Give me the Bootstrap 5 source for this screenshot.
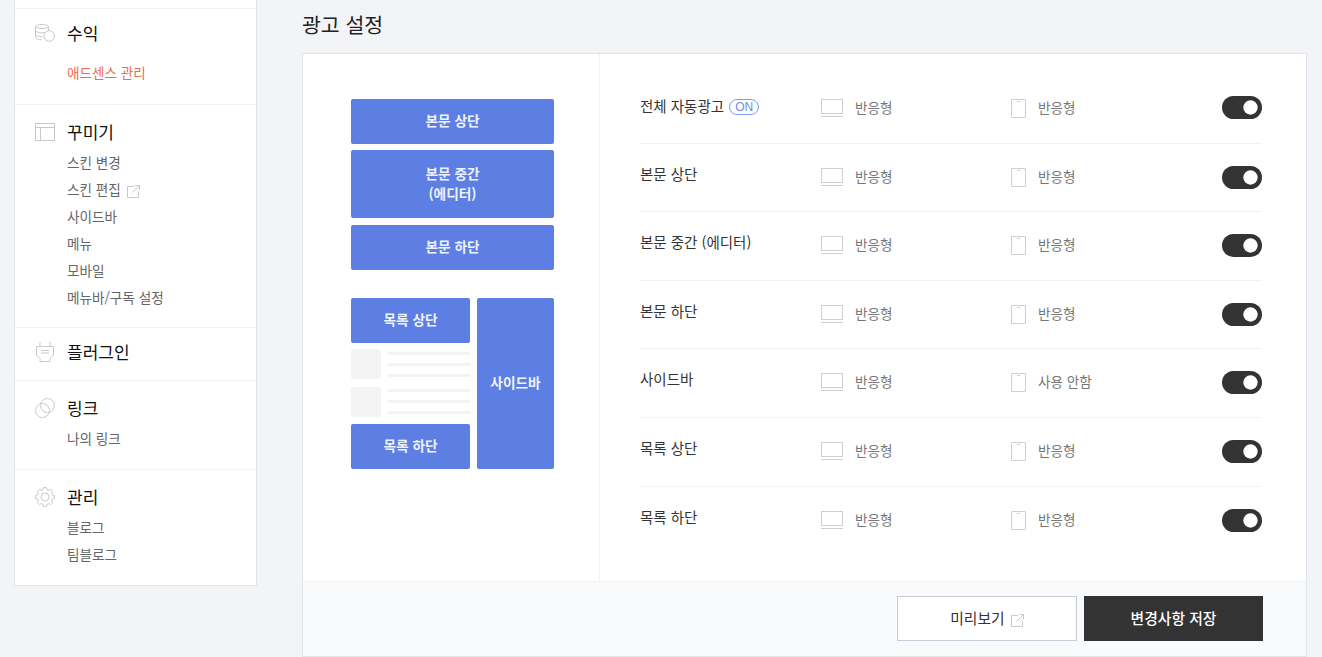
<!DOCTYPE html>
<html lang="ko">
<head>
    <meta charset="UTF-8">
    <meta name="viewport" content="width=device-width, initial-scale=1.0">
    <link rel="stylesheet" href="https://cdn.jsdelivr.net/npm/bootstrap@5.3.2/dist/css/bootstrap.min.css">
    <title>광고 설정</title>
    <style>
        html, body { height: 657px; overflow: hidden; }
        body { background: #f3f4f7; font-family: "Noto Sans CJK KR", "Noto Sans", sans-serif; color: #333; }
        .page-wrap { padding: 0 15px 0 14px; height: 657px; }

        .side-box { width: 243px; height: 586px; flex: none; background: #fff; border: 1px solid #e2e4ec; border-top: 0; padding-top: 8px; }
        .side-sec { padding: 15px 20px 17px 20px; border-top: 1px solid #f1f2f5; }
        .side-sec.sec-rev { padding: 12px 20px 18px 20px; }
        .side-sec.sec-deco { padding-bottom: 16px; }
        .side-sec.sec-short { padding: 12px 20px 16px 20px; }
        .side-head { height: 24px; line-height: 24px; font-size: 17px; color: #111; gap: 12px; }
        .side-head svg { flex: none; }
        .side-sub { display: block; height: 27px; line-height: 27px; font-size: 13.6px; color: #666; margin-left: 32px; text-decoration: none; }
        .side-sub.first-gap { margin-top: 14px; }
        .side-sub.is-on { color: #ef6c50; }
        .side-sub svg { margin-left: 2px; }
        .side-list { padding-top: 5px; }

        .main-col { width: 1005px; margin-left: 45px; flex: none; }
        .main-title { height: 53px; margin: 0; padding-top: 9px; line-height: 30px; font-size: 20.5px; font-weight: 400; color: #222; }
        .main-card { height: 604px; background: #fff; border: 1px solid #e2e4ec; }
        .main-body { height: 527px; }
        .preview-pane { width: 297px; flex: none; border-right: 1px solid #f1f2f5; padding: 45px 0 0 48px; }
        .ad-block { background: #5d7fe3; color: #eef2fd; border-radius: 2px; font-size: 13.7px; font-weight: 700; line-height: 20px; text-align: center; padding-bottom: 3px; }
        .ad-sm { height: 45px; }
        .ad-lg { height: 68px; }
        .stack-top { width: 203px; gap: 6.4px; }
        .stack-low { width: 203px; margin-top: 28px; gap: 7px; height: 171px; }
        .low-left { width: 119px; }
        .low-right { width: 77px; }
        .fake-list { height: 81px; padding: 6px 0 7px; gap: 8px; }
        .fake-item { height: 30px; gap: 7px; }
        .fake-thumb { width: 30px; background: #f4f4f4; border-radius: 2px; }
        .fake-lines { gap: 8px; padding-top: 3px; }
        .fake-item + .fake-item .fake-lines { padding-top: 2px; }
        .fake-lines i { display: block; height: 3px; background: #f3f3f3; }

        .rows-pane { padding: 21px 44px 0 40px; min-width: 0; }
        .ad-row { height: 68.6px; padding-top: 22px; border-bottom: 1px solid #f1f2f5; }
        .ad-row:first-child { padding-top: 21px; }
        .ad-row:last-child { border-bottom: 0; }
        .row-name { width: 181px; flex: none; font-size: 14.5px; line-height: 20px; color: #333; margin-top: -2px; }
        .ad-row:first-child .row-name { margin-top: 0; }
        .on-tag { display: inline-block; height: 16px; padding: 0 5px; margin-left: 1px; border: 1px solid #7d9bec; border-radius: 8px; color: #6c8ce8; font: 400 12px/14px "Liberation Sans", sans-serif; vertical-align: 1px; }
        .dev-pc { width: 190px; flex: none; gap: 12px; }
        .dev-mo { gap: 12px; }
        .dev-pc svg, .dev-mo svg { margin-top: 2px; }
        .ad-row:first-child .dev-pc svg, .ad-row:first-child .dev-mo svg { margin-top: 3px; }
        .dev-txt { font-size: 13.6px; line-height: 22px; color: #777; margin-top: -1px; }
        .ad-row:first-child .dev-txt { margin-top: 0; }
        .form-switch .form-check-input.ad-toggle {
            width: 40px; height: 23px; margin: 0; float: none;
            background-color: #333; border: 0;
            background-image: url("data:image/svg+xml,%3csvg xmlns='http://www.w3.org/2000/svg' viewBox='-4 -4 8 8'%3e%3ccircle r='2.5' fill='%23fff'/%3e%3c/svg%3e");
            background-position: right center;
        }
        .form-switch.ad-switch { padding: 0; min-height: 0; margin: 0; }

        .main-foot { height: 75px; background: #f9fafc; border-top: 1px solid #eef0f4; padding: 14px 43px 0 0; gap: 7px; }
        .foot-btn { height: 45px; border-radius: 0; font-size: 14.8px; padding: 0; }
        .foot-ghost { width: 180px; background: #fff; border: 1px solid #c8ccd8; color: #333; }
        .foot-ghost svg { margin-left: 2px; }
        .foot-dark { width: 179px; background: #333; border: 1px solid #333; color: #fff; font-weight: 500; }
    </style>
</head>
<body>
    <svg width="0" height="0" class="d-none">
        <symbol id="ico-pc" viewBox="0 0 22 19"><rect x=".5" y=".5" width="21" height="14" fill="none" stroke="#cfcfcf"/><path d="M0 17.500h22" fill="none" stroke="#cfcfcf"/></symbol>
        <symbol id="ico-mo" viewBox="0 0 15 19"><rect x=".5" y=".5" width="14" height="18" rx=".5" fill="none" stroke="#cfcfcf"/><path d="M6 2.500h3" fill="none" stroke="#cfcfcf"/></symbol>
        <symbol id="ico-ext" viewBox="0 0 13 13"><path d="M7 1.500H.5v11h11V6.500M5.500 7.500l6.500-6.500M8 .5h4.500V5" fill="none" stroke="#c9c9c9"/></symbol>
    </svg>
    <div class="page-wrap d-flex">
        <nav class="side-box">
            <div class="side-sec sec-rev">
                <div class="side-head d-flex align-items-center">
                    <svg width="20" height="18" viewBox="0 0 20 18" fill="none" stroke="#c9c9c9"><ellipse cx="7" cy="2.500" rx="6.500" ry="2"/><path d="M.5 2.500v11c0 1.300 3 2.200 6.500 2.200M.5 6.500c0 1.300 3 2.200 6.500 2.200 1.200 0 2.300-.1 3.200-.3M.5 10.500c0 1.300 3 2.200 7 2.200M13.500 2.500v4"/><circle cx="14.200" cy="12" r="5.300" fill="#fff"/></svg>
                    <span>수익</span>
                </div>
                <a class="side-sub first-gap is-on" href="#">애드센스 관리</a>
            </div>
            <div class="side-sec sec-deco">
                <div class="side-head d-flex align-items-center">
                    <svg width="20" height="18" viewBox="0 0 20 18" fill="none" stroke="#c9c9c9"><rect x=".5" y=".5" width="19" height="17"/><path d="M.5 4.500h19M5.500 4.500v13"/></svg>
                    <span>꾸미기</span>
                </div>
                <div class="side-list">
                    <a class="side-sub" href="#">스킨 변경</a>
                    <a class="side-sub" href="#">스킨 편집 <svg width="13" height="13"><use href="#ico-ext"/></svg></a>
                    <a class="side-sub" href="#">사이드바</a>
                    <a class="side-sub" href="#">메뉴</a>
                    <a class="side-sub" href="#">모바일</a>
                    <a class="side-sub" href="#">메뉴바/구독 설정</a>
                </div>
            </div>
            <div class="side-sec sec-short">
                <div class="side-head d-flex align-items-center">
                    <svg width="20" height="20" viewBox="0 0 20 20" fill="none" stroke="#c9c9c9"><path d="M5 0v4.500M15 0v4.500M1.500 4.500h17v8.500l-3.500 3.500v3h-10v-3l-3.500-3.500z"/><path d="M6 8.500h8M6 11h8"/></svg>
                    <span>플러그인</span>
                </div>
            </div>
            <div class="side-sec">
                <div class="side-head d-flex align-items-center">
                    <svg width="20" height="20" viewBox="0 0 20 20" fill="none" stroke="#c9c9c9"><circle cx="7.500" cy="12.500" r="7"/><circle cx="12.500" cy="7.500" r="7"/></svg>
                    <span>링크</span>
                </div>
                <div class="side-list">
                    <a class="side-sub" href="#">나의 링크</a>
                </div>
            </div>
            <div class="side-sec">
                <div class="side-head d-flex align-items-center">
                    <svg width="20" height="20" viewBox="0 0 20 20" fill="none" stroke="#c9c9c9" stroke-linejoin="round"><path d="M8.140 2.530 8.350.64h3.300l.21 1.890 2.110.87 1.480-1.180 2.330 2.330-1.180 1.480.87 2.110 1.890.21v3.300l-1.890.21-.87 2.110 1.180 1.480-2.330 2.330-1.480-1.180-2.110.87-.21 1.890h-3.300l-.21-1.890-2.110-.87-1.480 1.180-2.330-2.330 1.180-1.480-.87-2.110-1.890-.21v-3.300l1.890-.21.87-2.110-1.180-1.480 2.330-2.330 1.480 1.180z"/><circle cx="10" cy="10" r="4"/></svg>
                    <span>관리</span>
                </div>
                <div class="side-list">
                    <a class="side-sub" href="#">블로그</a>
                    <a class="side-sub" href="#">팀블로그</a>
                </div>
            </div>
        </nav>

        <main class="main-col">
            <h2 class="main-title">광고 설정</h2>
            <div class="main-card">
                <div class="main-body d-flex">
                    <div class="preview-pane">
                        <div class="stack-top d-flex flex-column">
                            <div class="ad-block ad-sm d-flex align-items-center justify-content-center">본문 상단</div>
                            <div class="ad-block ad-lg d-flex align-items-center justify-content-center">본문 중간<br>(에디터)</div>
                            <div class="ad-block ad-sm d-flex align-items-center justify-content-center">본문 하단</div>
                        </div>
                        <div class="stack-low d-flex">
                            <div class="low-left d-flex flex-column">
                                <div class="ad-block ad-sm d-flex align-items-center justify-content-center">목록 상단</div>
                                <div class="fake-list d-flex flex-column">
                                    <div class="fake-item d-flex">
                                        <div class="fake-thumb"></div>
                                        <div class="fake-lines flex-grow-1 d-flex flex-column"><i></i><i></i><i></i></div>
                                    </div>
                                    <div class="fake-item d-flex">
                                        <div class="fake-thumb"></div>
                                        <div class="fake-lines flex-grow-1 d-flex flex-column"><i></i><i></i><i></i></div>
                                    </div>
                                </div>
                                <div class="ad-block ad-sm d-flex align-items-center justify-content-center">목록 하단</div>
                            </div>
                            <div class="low-right ad-block d-flex align-items-center justify-content-center">사이드바</div>
                        </div>
                    </div>
                    <div class="rows-pane flex-grow-1">
                        <div class="ad-row d-flex">
                            <div class="row-name">전체 자동광고 <span class="on-tag">ON</span></div>
                            <div class="dev-pc d-flex"><svg width="22" height="19"><use href="#ico-pc"/></svg><span class="dev-txt">반응형</span></div>
                            <div class="dev-mo d-flex flex-grow-1"><svg width="15" height="19"><use href="#ico-mo"/></svg><span class="dev-txt">반응형</span></div>
                            <div class="form-check form-switch ad-switch"><input class="form-check-input ad-toggle" type="checkbox" role="switch" checked></div>
                        </div>
                        <div class="ad-row d-flex">
                            <div class="row-name">본문 상단</div>
                            <div class="dev-pc d-flex"><svg width="22" height="19"><use href="#ico-pc"/></svg><span class="dev-txt">반응형</span></div>
                            <div class="dev-mo d-flex flex-grow-1"><svg width="15" height="19"><use href="#ico-mo"/></svg><span class="dev-txt">반응형</span></div>
                            <div class="form-check form-switch ad-switch"><input class="form-check-input ad-toggle" type="checkbox" role="switch" checked></div>
                        </div>
                        <div class="ad-row d-flex">
                            <div class="row-name">본문 중간 (에디터)</div>
                            <div class="dev-pc d-flex"><svg width="22" height="19"><use href="#ico-pc"/></svg><span class="dev-txt">반응형</span></div>
                            <div class="dev-mo d-flex flex-grow-1"><svg width="15" height="19"><use href="#ico-mo"/></svg><span class="dev-txt">반응형</span></div>
                            <div class="form-check form-switch ad-switch"><input class="form-check-input ad-toggle" type="checkbox" role="switch" checked></div>
                        </div>
                        <div class="ad-row d-flex">
                            <div class="row-name">본문 하단</div>
                            <div class="dev-pc d-flex"><svg width="22" height="19"><use href="#ico-pc"/></svg><span class="dev-txt">반응형</span></div>
                            <div class="dev-mo d-flex flex-grow-1"><svg width="15" height="19"><use href="#ico-mo"/></svg><span class="dev-txt">반응형</span></div>
                            <div class="form-check form-switch ad-switch"><input class="form-check-input ad-toggle" type="checkbox" role="switch" checked></div>
                        </div>
                        <div class="ad-row d-flex">
                            <div class="row-name">사이드바</div>
                            <div class="dev-pc d-flex"><svg width="22" height="19"><use href="#ico-pc"/></svg><span class="dev-txt">반응형</span></div>
                            <div class="dev-mo d-flex flex-grow-1"><svg width="15" height="19"><use href="#ico-mo"/></svg><span class="dev-txt">사용 안함</span></div>
                            <div class="form-check form-switch ad-switch"><input class="form-check-input ad-toggle" type="checkbox" role="switch" checked></div>
                        </div>
                        <div class="ad-row d-flex">
                            <div class="row-name">목록 상단</div>
                            <div class="dev-pc d-flex"><svg width="22" height="19"><use href="#ico-pc"/></svg><span class="dev-txt">반응형</span></div>
                            <div class="dev-mo d-flex flex-grow-1"><svg width="15" height="19"><use href="#ico-mo"/></svg><span class="dev-txt">반응형</span></div>
                            <div class="form-check form-switch ad-switch"><input class="form-check-input ad-toggle" type="checkbox" role="switch" checked></div>
                        </div>
                        <div class="ad-row d-flex">
                            <div class="row-name">목록 하단</div>
                            <div class="dev-pc d-flex"><svg width="22" height="19"><use href="#ico-pc"/></svg><span class="dev-txt">반응형</span></div>
                            <div class="dev-mo d-flex flex-grow-1"><svg width="15" height="19"><use href="#ico-mo"/></svg><span class="dev-txt">반응형</span></div>
                            <div class="form-check form-switch ad-switch"><input class="form-check-input ad-toggle" type="checkbox" role="switch" checked></div>
                        </div>
                    </div>
                </div>
                <div class="main-foot d-flex justify-content-end align-items-start">
                    <button type="button" class="btn foot-btn foot-ghost">미리보기 <svg width="13" height="13"><use href="#ico-ext"/></svg></button>
                    <button type="button" class="btn foot-btn foot-dark">변경사항 저장</button>
                </div>
            </div>
        </main>
    </div>
    <script src="https://cdn.jsdelivr.net/npm/bootstrap@5.3.2/dist/js/bootstrap.bundle.min.js"></script>
</body>
</html>
